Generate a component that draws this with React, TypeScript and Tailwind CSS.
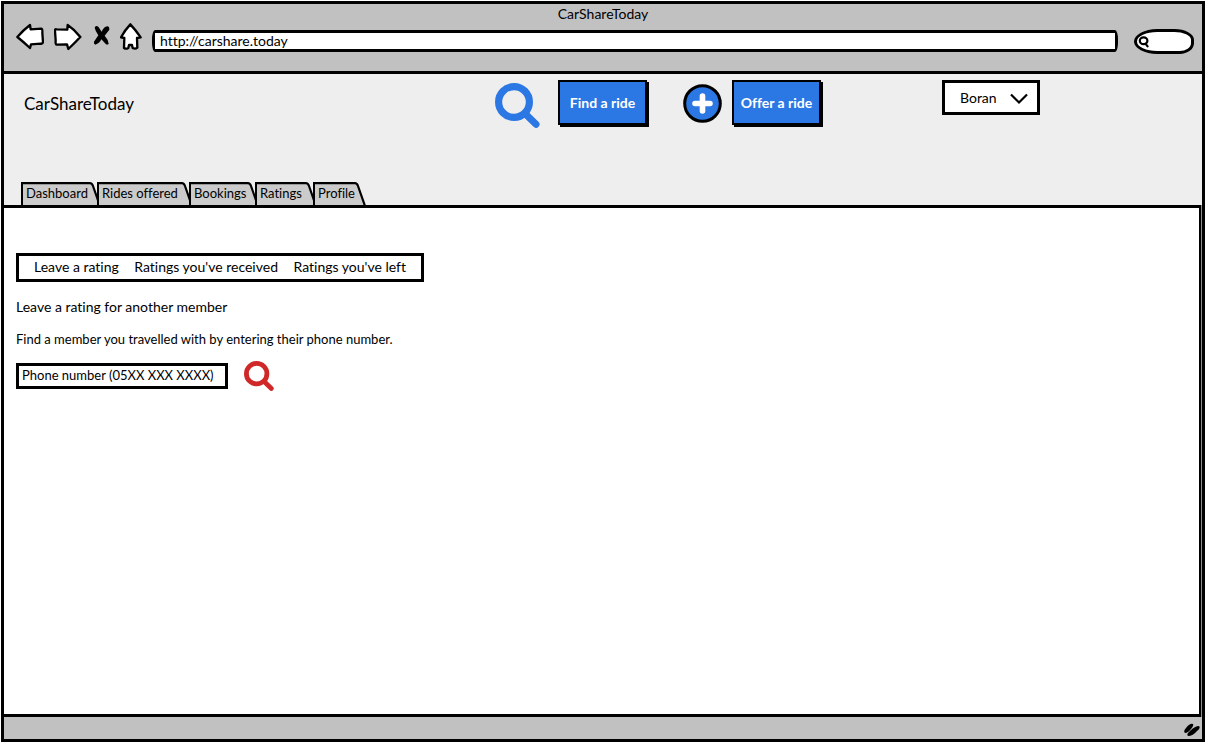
import React from "react";

const tabs = [
  { label: "Dashboard", width: "w-[76px]" },
  { label: "Rides offered", width: "w-[92px]" },
  { label: "Bookings", width: "w-[66px]" },
  { label: "Ratings", width: "w-[58px]" },
  { label: "Profile", width: "w-[49px]" },
];

const sections = ["Leave a rating", "Ratings you've received", "Ratings you've left"];

function SearchIcon({ className }: { className: string }) {
  return (
    <svg viewBox="0 0 45 45" className={className} fill="none" stroke="currentColor" aria-hidden="true">
      <circle cx="19" cy="19" r="15.4" strokeWidth="7.2" />
      <path d="M31 31.5L41 41.3" strokeWidth="7" strokeLinecap="round" />
    </svg>
  );
}

function BrowserBar() {
  return (
    <header className="h-[70px] border-b-[3px] border-black bg-[#c1c1c1]">
      <h1 className="text-center text-sm leading-[19px]">CarShareToday</h1>
      <div className="flex items-start gap-[10px] pr-2 pl-3">
        <button type="button" aria-label="Back">
          <svg viewBox="0 0 84 84" className="block h-7 w-7" fill="white" stroke="black" strokeWidth="7" strokeLinejoin="round">
            <path d="M4 42Q22 21 42 6L44 19L76 17Q80 18 79 30L81 58Q80 63 74 62L45 64L42 75Q24 58 4 42Z" />
          </svg>
        </button>
        <button type="button" aria-label="Forward">
          <svg viewBox="0 0 84 84" className="block h-7 w-7" fill="white" stroke="black" strokeWidth="7" strokeLinejoin="round">
            <path d="M3 24Q1 18 8 19L40 20L41 6Q62 20 79 42Q62 60 43 78L39 64L8 65Q4 64 5 52Z" />
          </svg>
        </button>
        <button type="button" aria-label="Stop">
          <svg viewBox="0 0 54 84" className="block h-7 w-[18px]" fill="black">
            <path d="M8 14Q10 6 19 11L29 26Q36 10 48 10Q53 13 52 20L38 38Q49 50 50 62Q48 66 42 64L28 49Q22 62 10 65Q4 62 6 56L19 37Q10 24 8 14Z" />
          </svg>
        </button>
        <button type="button" aria-label="Home">
          <svg viewBox="0 0 66 84" className="block h-7 w-[22px]" fill="white" stroke="black" strokeWidth="7" strokeLinejoin="round">
            <path d="M31 4Q48 22 62 43L51 45L52 74Q46 79 38 75L36 66H27L25 75Q18 79 12 75L13 45L3 43Q14 22 31 4Z" />
          </svg>
        </button>
        <input
          type="text"
          aria-label="Address"
          defaultValue="http://carshare.today"
          className="mt-[7px] h-[22px] min-w-0 grow rounded-[3px/9px] border-[3px] border-black bg-white px-[5px] pb-[2px] text-sm leading-none outline-none"
        />
        <label className="mt-[6px] ml-[6px] flex h-[25px] w-[60px] shrink-0 items-center rounded-[26px_22px_16px_26px/14px_12px_12px_14px] border-[3px] border-black bg-white pl-[1px]">
          <svg viewBox="0 0 12 12" className="h-3 w-3 shrink-0" fill="none" stroke="black" strokeWidth="2.2" strokeLinecap="round" aria-hidden="true">
            <ellipse cx="5.6" cy="4.8" rx="3.8" ry="3.4" />
            <path d="M7.4 7.6L9.6 10.4" />
          </svg>
          <input type="search" aria-label="Search the web" className="h-4 w-full min-w-0 bg-transparent text-xs outline-none" />
        </label>
      </div>
    </header>
  );
}

function Tab({ label, width }: { label: string; width: string }) {
  return (
    <a href="#" className={`relative flex h-[23px] items-center pl-[5px] whitespace-nowrap ${width}`}>
      <svg
        viewBox="0 0 120 23"
        preserveAspectRatio="xMaxYMid slice"
        className="absolute top-0 left-0 h-full w-[calc(100%+4px)] overflow-hidden border-l-2 border-black"
        aria-hidden="true"
      >
        <path d="M-20 1.2H109Q111 1.2 112 4L119 24H-20Z" fill="#cbcbcb" stroke="black" strokeWidth="2.2" />
      </svg>
      <span className="relative">{label}</span>
    </a>
  );
}

function SiteHeader() {
  return (
    <div className="bg-[#eeeeee] pt-[6px]">
      <div className="grid h-12 grid-cols-[491fr_447fr_260fr] items-start">
        <a href="#" className="flex h-[47px] items-center pl-5 text-[17px]">
          CarShareToday
        </a>
        <div className="flex items-start text-sm font-bold text-white">
          <SearchIcon className="mt-[3px] mr-[18px] h-[45px] w-[45px] shrink-0 text-[#2b78e4]" />
          <button type="button" className="mr-9 h-[45px] w-[89px] shrink-0 border-2 border-black bg-[#2b78e4] shadow-[2px_2px_0_black]">
            Find a ride
          </button>
          <svg viewBox="0 0 39 39" className="mt-1 mr-[10px] h-[39px] w-[39px] shrink-0" aria-hidden="true">
            <circle cx="19.5" cy="19.5" r="17.8" fill="#2b78e4" stroke="black" strokeWidth="3" />
            <path d="M19.5 12V27M12 19.5H27" stroke="white" strokeWidth="5.6" strokeLinecap="round" />
          </svg>
          <button type="button" className="h-[45px] w-[89px] shrink-0 border-2 border-black bg-[#2b78e4] whitespace-nowrap shadow-[2px_2px_0_black]">
            Offer a ride
          </button>
        </div>
        <div className="relative w-[98px]">
          <select aria-label="Account" className="h-[35px] w-full appearance-none border-[3px] border-black bg-white pl-[15px] text-sm outline-none">
            <option>Boran</option>
          </select>
          <svg viewBox="0 0 18 12" className="pointer-events-none absolute top-[13px] right-3 h-3 w-[18px]" fill="none" stroke="black" strokeWidth="2.2" aria-hidden="true">
            <path d="M1 1.5L9 9.5L17 1.5" />
          </svg>
        </div>
      </div>
      <nav aria-label="Main" className="mt-[54px] flex pl-[17px] text-[13px]">
        {tabs.map((tab) => (
          <Tab key={tab.label} label={tab.label} width={tab.width} />
        ))}
      </nav>
    </div>
  );
}

export default function App() {
  return (
    <div className="flex min-h-screen bg-white p-px font-['Lato',sans-serif] text-black [font-variant-ligatures:none]">
      <div className="flex grow flex-col border-[3px] border-black bg-[#8a8a8a]">
        <BrowserBar />
        <SiteHeader />
        <main className="mr-px grow border-y-[3px] border-r-2 border-black bg-white pt-[45px] pl-3 text-sm leading-4">
          <nav aria-label="Ratings" className="flex h-[29px] w-[408px] items-center justify-between border-[3px] border-black px-[15px] pb-[2px]">
            {sections.map((section) => (
              <a key={section} href="#">
                {section}
              </a>
            ))}
          </nav>
          <h2 className="mt-[17px]">Leave a rating for another member</h2>
          <p className="mt-4 text-[13px]">Find a member you travelled with by entering their phone number.</p>
          <form className="mt-[14px] flex items-center gap-4">
            <input
              type="tel"
              aria-label="Phone number"
              placeholder="Phone number (05XX XXX XXXX)"
              className="h-[26px] w-[212px] border-[3px] border-black px-[3px] pb-[2px] text-[13px] outline-none placeholder:text-black placeholder:opacity-100"
            />
            <button type="button" aria-label="Find member">
              <SearchIcon className="block h-[30px] w-[30px] text-[#d02828]" />
            </button>
          </form>
        </main>
        <footer className="flex h-[22px] items-center justify-end bg-[#c1c1c1] pt-1 pr-[2px]">
          <svg viewBox="0 0 16 14" className="h-[14px] w-4" fill="black" aria-hidden="true">
            <path d="M1 10Q-1 8 2 5Q6 0 9 1Q10 3 7 6Q4 10 1 10ZM4 13Q2 11 6 8Q11 3 15 3Q17 5 13 8Q9 13 4 13Z" />
          </svg>
        </footer>
      </div>
    </div>
  );
}
